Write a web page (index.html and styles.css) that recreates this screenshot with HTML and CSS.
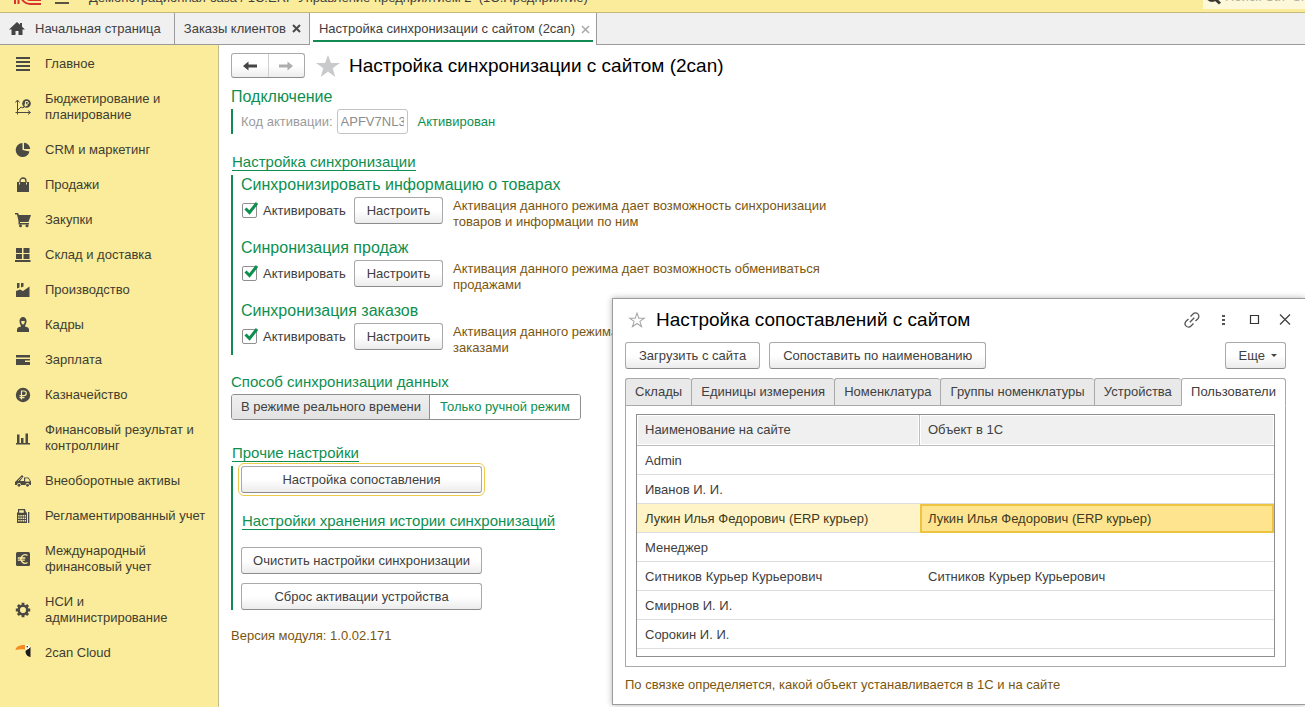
FILE: index.html
```html
<!DOCTYPE html>
<html lang="ru">
<head>
<meta charset="utf-8">
<title>Настройка синхронизации с сайтом (2can)</title>
<link rel="stylesheet" href="styles.css">
</head>
<body>
<div class="app">
  <header class="titlebar">
    <svg class="logo" width="30" height="20" viewBox="0 0 30 20" fill="none" stroke="#d9332e" stroke-width="2"><path d="M2 19V7M5.500 19V3M28 15H17a5 5 0 0 1 0-10M28 19H17a9 9 0 0 1-9-9"/></svg>
    <svg class="burger" width="14" height="12" viewBox="0 0 14 12" stroke="#5a5340" stroke-width="2"><path d="M0 1h14M0 6h14M0 11h14"/></svg>
    <span class="app-name">Демонстрационная база / 1С:ERP Управление предприятием 2&nbsp; (1С:Предприятие)</span>
    <label class="search">
      <svg width="16" height="16" viewBox="0 0 16 16" fill="none" stroke="#3c3a30"><circle cx="7" cy="7" r="5" stroke-width="2"/><path d="M10.500 10.500l4.500 4" stroke-width="3"/></svg>
      <input type="text" placeholder="Поиск Ctrl+Shift+F" aria-label="Поиск">
    </label>
  </header>

  <nav class="tabs">
    <a class="tab tab-home" href="#">
      <svg width="16" height="14" viewBox="0 0 16 14" fill="#444"><path d="M8 0L0 7.500h2.500V13H6.500V9h3v4h4V7.500H16L13 4.700V1h-2v1.800z"/></svg>
      Начальная страница</a>
    <a class="tab" href="#">Заказы клиентов
      <svg width="9" height="9" viewBox="0 0 9 9" stroke="#4a4a4a" stroke-width="2"><path d="M1 1l7 7M8 1l-7 7"/></svg></a>
    <a class="tab tab-active" href="#">Настройка синхронизации с сайтом (2can)
      <svg width="9" height="9" viewBox="0 0 9 9" stroke="#a8a8a8" stroke-width="1.500"><path d="M1 1l7 7M8 1l-7 7"/></svg></a>
  </nav>

  <div class="body">
    <nav class="sidebar">
      <a href="#"><svg viewBox="0 0 16 16"><path d="M1 1h14v2H1zM1 5h14v2H1zM1 9h14v2H1zM1 13h14v2H1z"/></svg>Главное</a>
      <a href="#"><svg viewBox="0 0 16 16"><path d="M2.500 1.500v12H15M.5 3.500l2-2.500 2 2.500M13 11.500l2.500 2-2.500 2M.5 13.500h2v2" fill="none" stroke="#4b4943"/><path d="M3 11l3-3 2 1 3-3" fill="none" stroke="#4b4943"/><circle cx="11.500" cy="4.500" r="4.300"/><path d="M10.500 7.500v-5H12a1.400 1.400 0 0 1 0 2.800H9.500M9.500 6.500h3" fill="none" stroke="#faec9b"/></svg>Бюджетирование и планирование</a>
      <a href="#"><svg viewBox="0 0 16 16"><path d="M7.500 1a7 7 0 1 0 7 8.500l-7-1.500z"/><path d="M9 .8V7h6.200A6.500 6.500 0 0 0 9 .8z"/></svg>CRM и маркетинг</a>
      <a href="#"><svg viewBox="0 0 16 16"><path d="M2 5h12v10H2z"/><path d="M5 7V4a3 3 0 0 1 6 0v3" fill="none" stroke="#4b4943" stroke-width="1.300"/><path d="M4.500 5.500v2M11.500 5.500v2" stroke="#faec9b"/></svg>Продажи</a>
      <a href="#"><svg viewBox="0 0 16 16"><path d="M0 1h3l1 2h12l-2.500 7H5v1h9v1.500H3.500V9L2 2.500H0z"/><circle cx="5.500" cy="13.800" r="1.500"/><circle cx="12" cy="13.800" r="1.500"/></svg>Закупки</a>
      <a href="#"><svg viewBox="0 0 16 16"><path d="M1 1h6v5H1zM8.500 1h6v5h-6zM1 7h6v5H1zM8.500 7h6v5h-6zM0 13h15.500v2H0z"/></svg>Склад и доставка</a>
      <a href="#"><svg viewBox="0 0 16 16"><path d="M1 15V9l4-1.500L8 9l6.500-4.500V15z"/><path d="M2 1h2.500v4.500L2 6.500zM6 1h2.500v3.500L6 5.500z"/></svg>Производство</a>
      <a href="#"><svg viewBox="0 0 16 16"><path d="M8 0a3.500 3.800 0 0 1 3.500 4c0 2-.8 3.800-1.500 4.800v.7c2.500.3 4 1.500 4 3V15H2v-2.500c0-1.500 1.500-2.700 4-3v-.7C5.300 7.800 4.500 6 4.500 4A3.500 3.800 0 0 1 8 0z"/><path d="M6.200 4c0 2 .8 3.500 1.800 3.500S9.800 6 9.800 4z" fill="#faec9b"/></svg>Кадры</a>
      <a href="#"><svg viewBox="0 0 16 16"><path d="M1 3h14v2.500H1zM1 7h14v1.500h-5V10h5v3H1z"/></svg>Зарплата</a>
      <a href="#"><svg viewBox="0 0 16 16"><circle cx="8" cy="8" r="7.200"/><path d="M6.500 12.500V4H9a2.300 2.300 0 0 1 0 4.600H4.500M4.500 10.600h5" fill="none" stroke="#faec9b" stroke-width="1.200"/></svg>Казначейство</a>
      <a href="#"><svg viewBox="0 0 16 16"><path d="M1 13h14v1.500H1zM2 4.500h2.500V14H2zM6 8h2.500v6H6zM10.500 3.500H13V14h-2.500z"/></svg>Финансовый результат и контроллинг</a>
      <a href="#"><svg viewBox="0 0 16 16"><path d="M0 9l7-7 1.500 1.500L5 8h4V4.500h4.500l2.500 4V12h-1.500a2 2 0 0 0-4 0H6a2 2 0 0 0-4 0H0z"/><path d="M10.500 5.700H13l1.500 2.500h-4zM3 8l4-4" fill="#faec9b" stroke="#faec9b" stroke-width=".7"/><circle cx="4" cy="12.300" r="1.400"/><circle cx="12.500" cy="12.300" r="1.400"/></svg>Внеоборотные активы</a>
      <a href="#"><svg viewBox="0 0 16 16"><path d="M3 4.500V1h7l1 3.500h1V15H2V4.500z"/><path d="M13 4h1.300v11H13z"/><path d="M4.200 2.300h4.600v2.500H4.200zM3.200 7h1.400v1.500H3.200zM5.400 7h1.400v1.500H5.400zM7.600 7H9v1.500H7.600zM9.700 7H11v1.500H9.700zM3.200 9.500h1.400V11H3.200zM5.400 9.500h1.400V11H5.400zM7.600 9.500H9V11H7.600zM9.700 9.500H11V11H9.700zM3.200 12h1.400v1.500H3.200zM5.400 12h1.400v1.500H5.400zM7.600 12H9v1.500H7.600zM9.700 12H11v1.500H9.700z" fill="#faec9b"/></svg>Регламентированный учет</a>
      <a href="#"><svg viewBox="0 0 16 16"><rect x="1" y="1" width="14" height="14" rx="1.500"/><path d="M12.500 4.500a4.200 4.200 0 1 0 0 7M2.800 7h7.500M2.800 9.200h7" fill="none" stroke="#faec9b" stroke-width="1.300"/></svg>Международный финансовый учет</a>
      <a href="#"><svg viewBox="0 0 16 16"><circle cx="8" cy="8" r="4.200" fill="none" stroke="#4b4943" stroke-width="2.600"/><path d="M8 .8v3M8 12.200v3M.8 8h3M12.200 8h3M2.900 2.900l2 2M11.100 11.100l2 2M2.900 13.100l2-2M11.100 4.900l2-2" stroke="#4b4943" stroke-width="2.800"/><circle cx="8" cy="8" r="2.700" fill="#faec9b"/></svg>НСИ и администрирование</a>
      <a href="#"><svg viewBox="0 0 16 16"><path d="M.5 5C1 1.500 4 0 10 0v4.500C7 4 4 4 .5 5z" fill="#f58a1f"/><path d="M10.500 6l3-2.500 2-1.500v10c-3.500-.5-5-3-5-6z" fill="#1c1c1c"/><path d="M10.500 0h2.500l2 2-1.500 2-3 .5z" fill="#fff"/><circle cx="12.200" cy="1.800" r=".8" fill="#1c1c1c"/></svg>2can Cloud</a>
    </nav>

    <main class="main">
      <div class="page-head">
        <div class="history">
          <button type="button" aria-label="Назад"><svg width="14" height="10" viewBox="0 0 14 10"><path d="M0 5l5.500-4.500v3H14v3H5.500v3z" fill="#444"/></svg></button>
          <button type="button" aria-label="Вперед"><svg width="14" height="10" viewBox="0 0 14 10"><path d="M14 5L8.500.5v3H0v3h8.500v3z" fill="#adadad"/></svg></button>
        </div>
        <svg class="star" width="24" height="22" viewBox="0 0 24 22"><path d="M12 0l2.900 8H24l-7.300 5.200L19.400 22 12 16.700 4.600 22l2.700-8.800L0 8h9.100z" fill="#c9cacc"/></svg>
        <h1>Настройка синхронизации с сайтом (2can)</h1>
      </div>

      <h2 class="head-connect">Подключение</h2>
      <div class="group connect">
        <label for="code">Код активации:</label>
        <input id="code" type="text" value="APFV7NL3K9" disabled>
        <span class="ok">Активирован</span>
      </div>

      <h2 class="head-sync"><a href="#">Настройка синхронизации</a></h2>
      <div class="group modes">
        <section>
          <h3>Синхронизировать информацию о товарах</h3>
          <div class="mode">
            <label class="check"><span class="box"><input type="checkbox" checked><svg width="17" height="16" viewBox="0 0 17 16"><path d="M3.500 7.500L7.500 11.500 15 2" fill="none" stroke="#0e8f4f" stroke-width="3"/></svg></span>Активировать</label>
            <button type="button" class="btn">Настроить</button>
            <p>Активация данного режима дает возможность синхронизации товаров и информации по ним</p>
          </div>
        </section>
        <section>
          <h3>Синронизация продаж</h3>
          <div class="mode">
            <label class="check"><span class="box"><input type="checkbox" checked><svg width="17" height="16" viewBox="0 0 17 16"><path d="M3.500 7.500L7.500 11.500 15 2" fill="none" stroke="#0e8f4f" stroke-width="3"/></svg></span>Активировать</label>
            <button type="button" class="btn">Настроить</button>
            <p>Активация данного режима дает возможность обмениваться продажами</p>
          </div>
        </section>
        <section>
          <h3>Синхронизация заказов</h3>
          <div class="mode">
            <label class="check"><span class="box"><input type="checkbox" checked><svg width="17" height="16" viewBox="0 0 17 16"><path d="M3.500 7.500L7.500 11.500 15 2" fill="none" stroke="#0e8f4f" stroke-width="3"/></svg></span>Активировать</label>
            <button type="button" class="btn">Настроить</button>
            <p>Активация данного режима дает возможность обмениваться заказами</p>
          </div>
        </section>
      </div>

      <h2 class="head-method">Способ синхронизации данных</h2>
      <div class="segmented">
        <label><input type="radio" name="method">В режиме реального времени</label>
        <label><input type="radio" name="method" checked>Только ручной режим</label>
      </div>

      <h2 class="head-other"><a href="#">Прочие настройки</a></h2>
      <div class="group other">
        <button type="button" class="btn focused">Настройка сопоставления</button>
        <h3><a href="#">Настройки хранения истории синхронизаций</a></h3>
        <button type="button" class="btn">Очистить настройки синхронизации</button>
        <button type="button" class="btn">Сброс активации устройства</button>
      </div>
      <p class="version">Версия модуля: 1.0.02.171</p>
    </main>
  </div>

  <div class="dialog" role="dialog" aria-labelledby="dialog-title">
    <div class="dialog-head">
      <svg width="18" height="16" viewBox="0 0 24 22" fill="none" stroke="#a5a5a5" stroke-width="1.400"><path d="M12 1.500l2.500 7H22l-6 4.400 2.300 7.300L12 15.800l-6.300 4.400L8 12.900 2 8.500h7.500z"/></svg>
      <h2 id="dialog-title">Настройка сопоставлений с сайтом</h2>
      <div class="window-tools">
        <button type="button" aria-label="Ссылка"><svg width="16" height="16" viewBox="0 0 16 16" fill="none" stroke="#555" stroke-width="1.300"><path d="M6.500 4.500L9 2a3.300 3.300 0 0 1 4.900 4.700L11.500 9M9.500 11.500L7 14a3.300 3.300 0 0 1-4.900-4.700L4.500 7M5.800 10.300l4.500-4.500"/></svg></button>
        <button type="button" aria-label="Меню"><svg width="16" height="16" viewBox="0 0 16 16" fill="#555"><path d="M7 3h3v2H7zM7 7h3v2H7zM7 11h3v2H7z"/></svg></button>
        <button type="button" aria-label="Развернуть"><svg width="16" height="16" viewBox="0 0 16 16" fill="none" stroke="#333" stroke-width="1.200"><path d="M4.500 3.500h8v8h-8z"/></svg></button>
        <button type="button" aria-label="Закрыть"><svg width="16" height="16" viewBox="0 0 16 16" fill="none" stroke="#444" stroke-width="1.300"><path d="M3 2.500l10 10M13 2.500l-10 10"/></svg></button>
      </div>
    </div>
    <div class="dialog-actions">
      <button type="button" class="btn">Загрузить с сайта</button>
      <button type="button" class="btn">Сопоставить по наименованию</button>
      <button type="button" class="btn more">Еще <svg width="6" height="3" viewBox="0 0 6 3"><path d="M0 0h6L3 3z" fill="#444"/></svg></button>
    </div>
    <div class="pages" role="tablist">
      <button type="button" role="tab">Склады</button>
      <button type="button" role="tab">Единицы измерения</button>
      <button type="button" role="tab">Номенклатура</button>
      <button type="button" role="tab">Группы номенклатуры</button>
      <button type="button" role="tab">Устройства</button>
      <button type="button" role="tab" aria-selected="true">Пользователи</button>
    </div>
    <div class="page">
      <div class="grid">
        <table>
          <thead><tr><th>Наименование на сайте</th><th>Объект в 1С</th></tr></thead>
          <tbody>
            <tr><td>Admin</td><td></td></tr>
            <tr><td>Иванов И. И.</td><td></td></tr>
            <tr class="selected"><td>Лукин Илья Федорович (ERP курьер)</td><td class="current">Лукин Илья Федорович (ERP курьер)</td></tr>
            <tr><td>Менеджер</td><td></td></tr>
            <tr><td>Ситников Курьер Курьерович</td><td>Ситников Курьер Курьерович</td></tr>
            <tr><td>Смирнов И. И.</td><td></td></tr>
            <tr><td>Сорокин И. И.</td><td></td></tr>
          </tbody>
        </table>
      </div>
    </div>
    <p class="note">По связке определяется, какой объект устанавливается в 1С и на сайте</p>
  </div>
</div>
</body>
</html>
```
FILE: styles.css
```css
* { box-sizing: border-box; }
body, h1, h2, h3, p { margin: 0; }
body, button, input {
  font-family: "Liberation Sans", Arial, sans-serif;
  font-size: 13px;
  line-height: 16px;
  color: #404040;
}
body { background: #fff; }
a { color: inherit; text-decoration: none; }
svg { flex: none; display: block; }
h1, h2, h3 { font-weight: 400; }

.app { position: relative; display: flex; flex-direction: column; min-height: 100vh; overflow: hidden; }

.titlebar {
  display: flex;
  align-items: flex-end;
  height: 13px;
  padding-left: 13px;
  background: #faec9b;
  border-bottom: 1px solid #c5b878;
  overflow: hidden;
}
.logo { margin: 0 12px 7px 0; }
.burger { margin: 0 20px 8px 0; }
.app-name { margin-bottom: 6px; white-space: nowrap; }
.search { display: flex; align-items: flex-end; width: 102px; height: 20px; margin: 0 0 3px auto; padding: 0 0 4px 2px; background: #fdf8da; }
.search input { flex: 1; min-width: 0; height: 16px; padding: 0 0 0 4px; border: 0; background: none; }
.search input::placeholder { color: #b3b1a0; }

.tabs { display: flex; height: 32px; background: #f0f0f0; border-bottom: 1px solid #9b9b9b; }
.tab { display: flex; align-items: center; gap: 6px; padding: 0 8px 0 9px; border-right: 1px solid #9b9b9b; white-space: nowrap; }
.tab-home { gap: 10px; padding: 0 13px 0 9px; }
.tab-active { position: relative; margin-bottom: -1px; padding: 0 6px 0 9px; background: #fff; }
.tab-active::after { content: ""; position: absolute; left: 3px; right: 3px; bottom: 3px; height: 2px; background: #138a51; }

.body { flex: 1; display: flex; }
.sidebar { flex: none; width: 219px; padding-top: 1px; background: #faec9b; border-right: 1px solid #c5bd8e; }
.sidebar a { display: flex; align-items: center; gap: 14px; padding: 10px 8px 9px 15px; color: #413d30; }
.sidebar svg { width: 16px; height: 16px; fill: #4b4943; }

.main { flex: 1; padding: 8px 12px; }
.page-head { display: flex; align-items: center; }
.history { display: flex; width: 74px; height: 25px; border: 1px solid #a9a9a9; border-bottom-color: #8c8c8c; border-radius: 3px; background: linear-gradient(#fff 50%, #ededed); }
.history button { flex: 1; display: flex; align-items: center; justify-content: center; padding: 0; border: 0; background: none; }
.history button + button { border-left: 1px solid #cfcfcf; }
.star { margin: 0 9px 0 11px; }
h1, .dialog-head h2 { font-size: 19px; line-height: 24px; color: #000; white-space: nowrap; }

.main h2, .main h3 { font-size: 16px; line-height: 20px; color: #0e8f4f; }
.main h2 a, .main h3 a { display: inline-block; margin-left: 1px; font-size: 15px; line-height: 17px; border-bottom: 1px solid #0e8f4f; vertical-align: top; }
.main .head-connect { margin-top: 9px; }
.main .head-sync { margin: 19px 0 2px; }
.main .head-method { margin-top: 17px; font-size: 15px; }
.main .head-other { margin: 24px 0 2px; }

.group { border-left: 2px solid #138a51; padding-left: 8px; }
.connect { display: flex; align-items: center; margin-top: 2px; }
.connect label { color: #9b9b9b; }
.connect input { width: 71px; height: 25px; margin: 0 10px 0 4px; padding: 0 3px; border: 1px solid #c4c4c4; border-radius: 3px; background: #fff; color: #8c8c8c; font-size: 13px; }
.ok { color: #0e8f4f; }

.modes { display: flex; flex-direction: column; gap: 9px; }
.mode { display: flex; align-items: flex-start; padding-top: 2px; }
.check { display: flex; align-items: center; gap: 6px; width: 113px; height: 27px; padding-left: 1px; }
.box { position: relative; width: 15px; height: 15px; }
.box input { appearance: none; display: block; width: 15px; height: 15px; margin: 0; border: 1px solid #8f8f8f; border-radius: 2px; background: #fff; }
.box svg { position: absolute; left: 0; top: -2px; pointer-events: none; }
.mode p { width: 390px; margin: 1px 0 -1px 10px; color: #7a560f; }

.btn { height: 27px; padding: 0 13px; border: 1px solid #a9a9a9; border-bottom-color: #8c8c8c; border-radius: 3px; background: linear-gradient(#fff 50%, #ececec); white-space: nowrap; }
.mode .btn, .other .btn { padding: 0; }
.mode .btn { width: 89px; }

.segmented { display: inline-flex; height: 26px; margin-top: 2px; border: 1px solid #8f8f8f; border-radius: 3px; overflow: hidden; vertical-align: top; }
.segmented label { display: flex; align-items: center; padding: 0 10px; background: #fff; }
.segmented label:first-child { padding: 0 8px 0 9px; background: linear-gradient(#f0f0f0, #e2e2e2); border-right: 1px solid #8f8f8f; }
.segmented input { appearance: none; width: 0; margin: 0; }
.segmented label:has(:checked) { color: #0e8f4f; }

.other { display: flex; flex-direction: column; align-items: flex-start; }
.other .btn { width: 241px; }
.other .btn + .btn { margin-top: 9px; }
.other .focused { outline: 1px solid #ecca4c; outline-offset: 2px; }
.main .other h3 { margin: 19px 0 15px; }
.version { margin-top: 18px; color: #7a560f; }

.dialog { position: absolute; left: 612px; right: 0; top: 298px; padding: 7px 19px 11px 12px; border: 1px solid #9b9b9b; border-right: 0; background: #fff; box-shadow: 0 0 6px rgba(0, 0, 0, .3); }
.dialog-head { display: flex; align-items: center; height: 28px; padding-left: 3px; }
.dialog-head h2 { margin-left: 10px; }
.window-tools { display: flex; gap: 15px; margin: 0 -7px 0 auto; }
.window-tools button { padding: 0; border: 0; background: none; }
.dialog-actions { display: flex; gap: 9px; margin-top: 8px; }
.more { display: flex; align-items: center; gap: 6px; margin-left: auto; padding: 0 8px 0 13px; }

.pages { display: flex; margin-top: 9px; }
.pages button { flex: 1 1 auto; height: 28px; padding: 0 9px; border: 1px solid #a9a9a9; border-right-width: 0; border-radius: 3px 3px 0 0; background: #e9e9e9; white-space: nowrap; }
.pages button[aria-selected] { border-right-width: 1px; border-bottom-color: #fff; background: #fff; }
.page { margin-top: -1px; padding: 9px 10px; border: 1px solid #a9a9a9; border-top: 0; }
.grid { padding-bottom: 7px; border: 1px solid #8f8f8f; }
.grid table { width: 100%; border-collapse: separate; border-spacing: 0; table-layout: fixed; }
.grid th, .grid td { height: 29px; padding: 0 8px; border-bottom: 1px solid #dedede; text-align: left; font-weight: 400; }
.grid td { padding-top: 1px; }
.grid th { height: 31px; border-color: #bdbdbd; background: #f0f0f0; box-shadow: inset 0 0 0 1px #fff; }
.grid th:first-child { width: 283px; border-right: 1px solid #bdbdbd; }
.grid .selected td { background: #fff3c8; color: #403a20; }
.grid .selected .current { padding: 0 6px; border: 2px solid #edc43f; background: #ffe48f; }
.note { margin-top: 10px; color: #7a560f; }
```
